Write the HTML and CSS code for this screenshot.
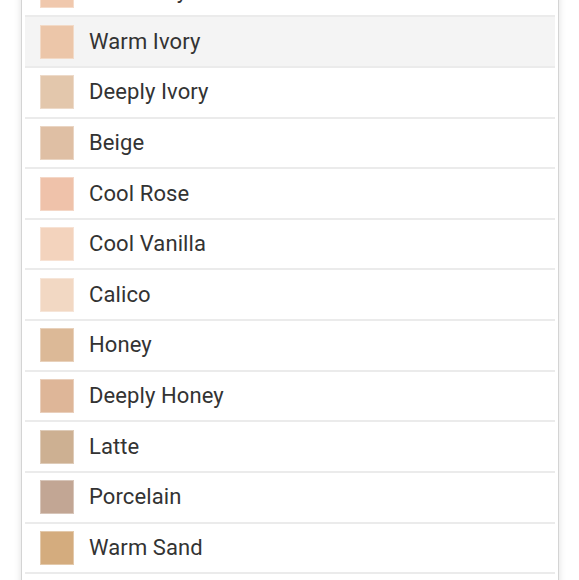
FILE: index.html
```html
<!DOCTYPE html>
<html lang="en">
<head>
<meta charset="utf-8">
<title>Shades</title>
<link rel="stylesheet" href="styles.css">
</head>
<body>
<div class="panel">
  <ul class="shades">
    <li class="shade"><span class="swatch" style="background:#f0c8ad"></span><span class="name">Cool Ivory</span></li>
    <li class="shade active"><span class="swatch" style="background:#ecc6a9"></span><span class="name">Warm Ivory</span></li>
    <li class="shade"><span class="swatch" style="background:#e3c7ac"></span><span class="name">Deeply Ivory</span></li>
    <li class="shade"><span class="swatch" style="background:#dfbfa4"></span><span class="name">Beige</span></li>
    <li class="shade"><span class="swatch" style="background:#efc2aa"></span><span class="name">Cool Rose</span></li>
    <li class="shade"><span class="swatch" style="background:#f3d3bd"></span><span class="name">Cool Vanilla</span></li>
    <li class="shade"><span class="swatch" style="background:#f2d8c3"></span><span class="name">Calico</span></li>
    <li class="shade"><span class="swatch" style="background:#dcb997"></span><span class="name">Honey</span></li>
    <li class="shade"><span class="swatch" style="background:#deb698"></span><span class="name">Deeply Honey</span></li>
    <li class="shade"><span class="swatch" style="background:#cdb092"></span><span class="name">Latte</span></li>
    <li class="shade"><span class="swatch" style="background:#c2a694"></span><span class="name">Porcelain</span></li>
    <li class="shade"><span class="swatch" style="background:#d4ac7e"></span><span class="name">Warm Sand</span></li>
  </ul>
</div>
</body>
</html>
```
FILE: styles.css
```css
html, body {
  margin: 0;
  padding: 0;
  background: #ffffff;
  overflow: hidden;
}

body {
  font-family: Roboto, "Liberation Sans", Arial, sans-serif;
  color: #333333;
}

.panel {
  box-sizing: border-box;
  width: 538px;
  margin: -41.2px 0 0 21px;
  padding: 6.9px 3px 40px;
  border: 1px solid #d4d4d4;
  background: #ffffff;
  box-shadow: 0 0 7px rgba(0, 0, 0, 0.13);
}

.shades {
  list-style: none;
  margin: 0;
  padding: 0;
}

.shade {
  display: flex;
  align-items: center;
  gap: 15px;
  height: 48.63px;
  padding: 0 15px;
  border-bottom: 2px solid #ebebeb;
}

.shade.active {
  background: #f4f4f4;
}

.swatch {
  flex: none;
  box-sizing: border-box;
  width: 34px;
  height: 34px;
  border: 1px solid rgba(255, 255, 255, 0.35);
}

.name {
  font-size: 22px;
  line-height: 1;
  letter-spacing: 0.1px;
}
```
